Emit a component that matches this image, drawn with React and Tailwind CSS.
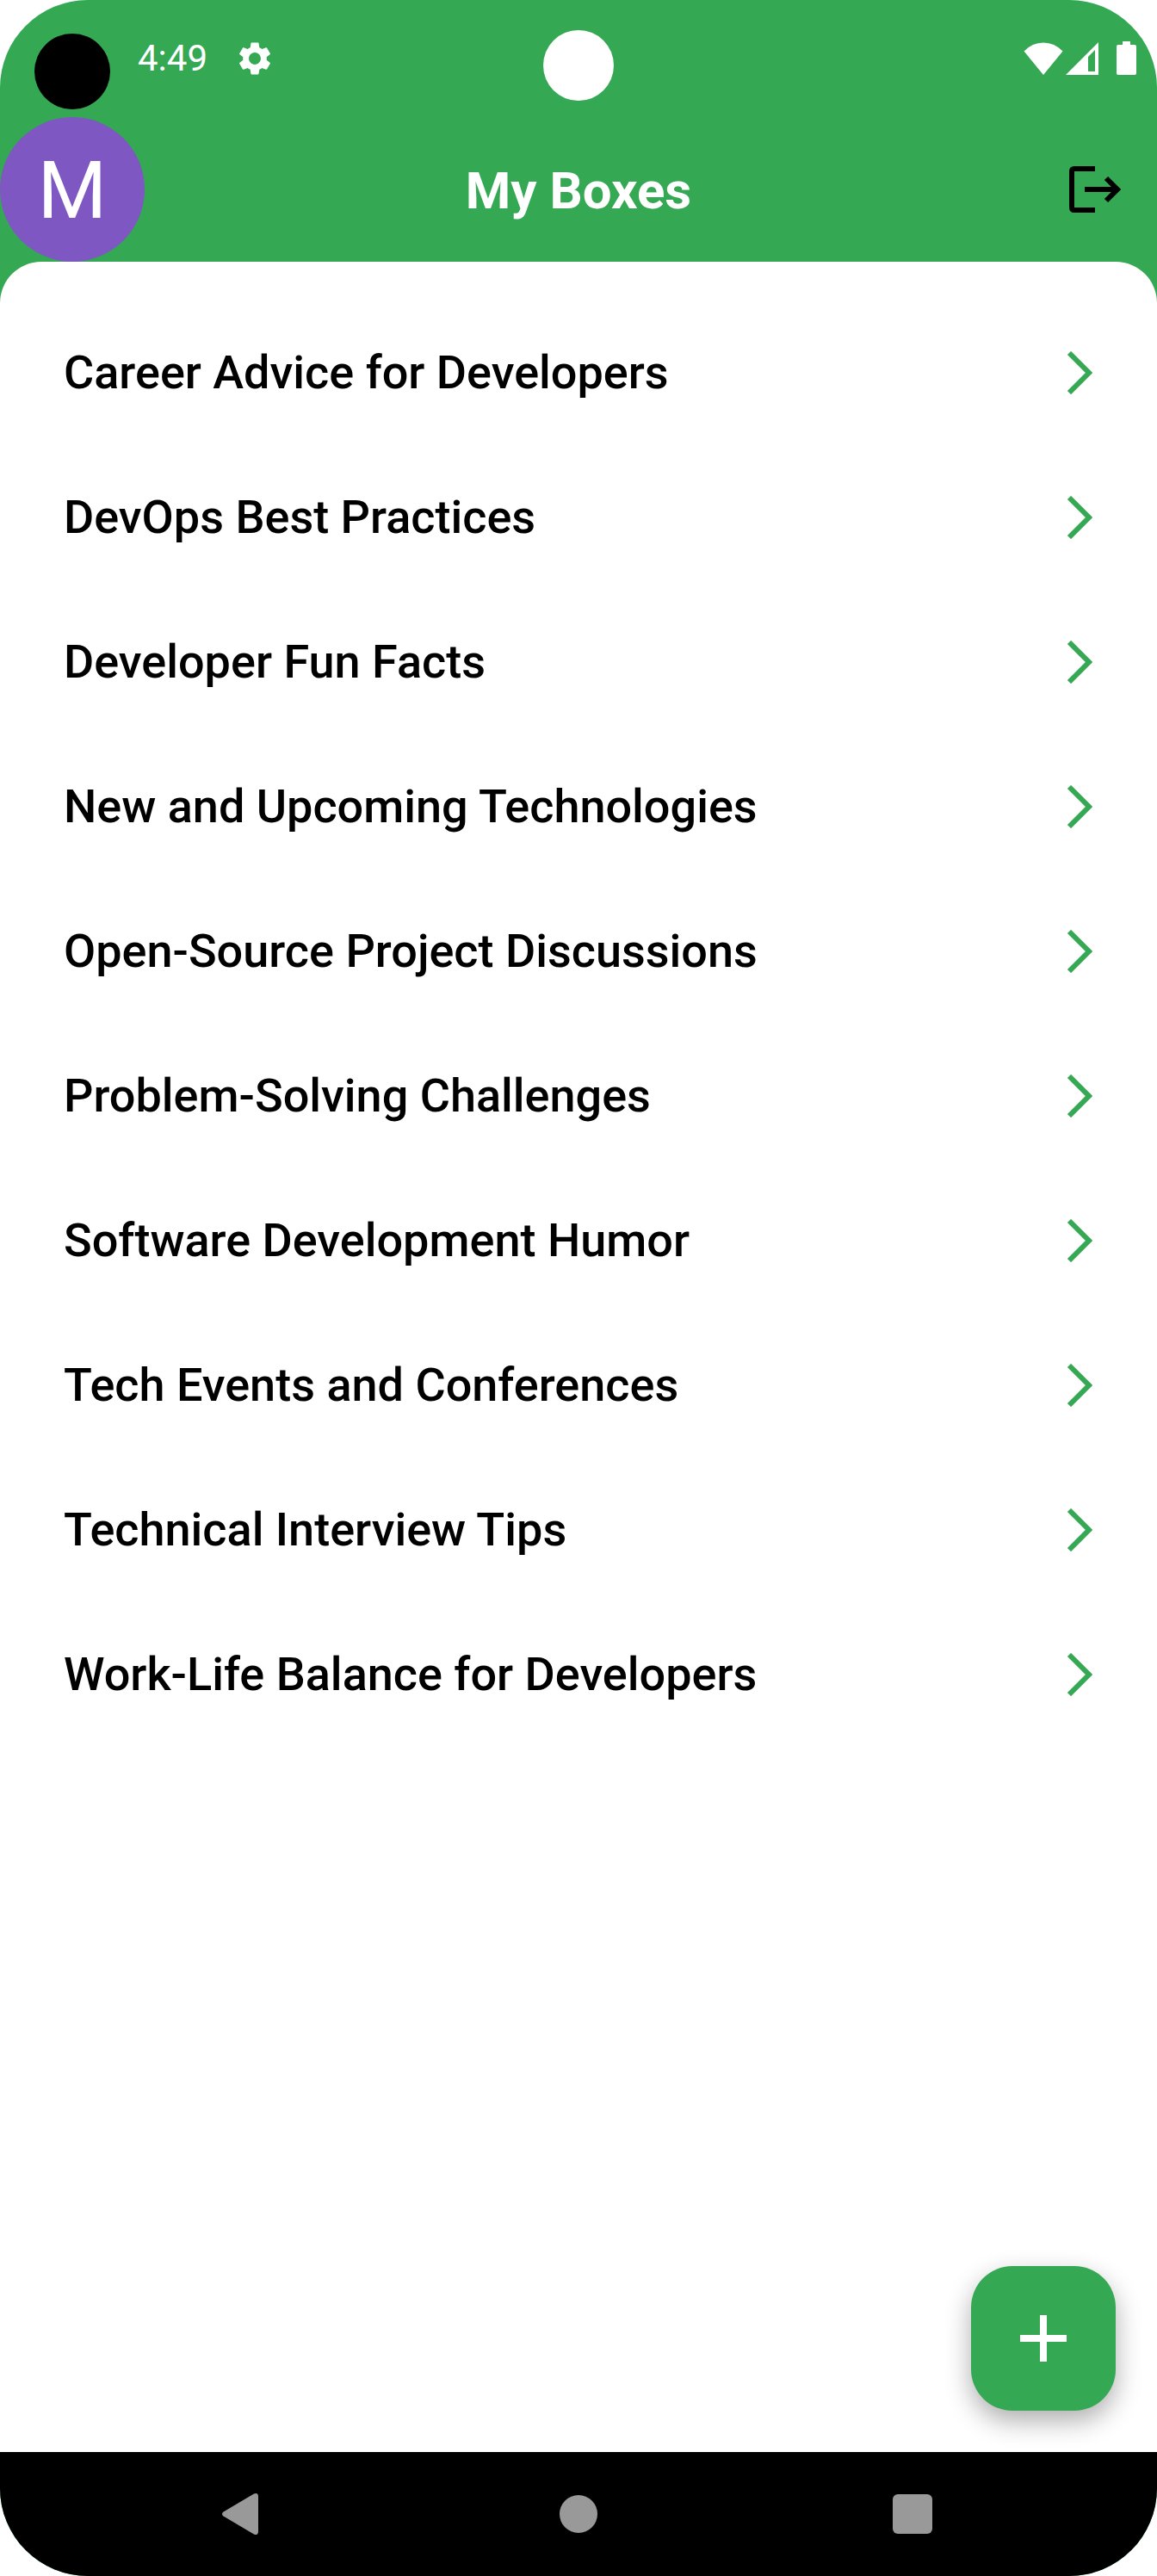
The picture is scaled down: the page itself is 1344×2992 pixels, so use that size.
import { MdSettings } from "react-icons/md";

const boxes = [
  "Career Advice for Developers",
  "DevOps Best Practices",
  "Developer Fun Facts",
  "New and Upcoming Technologies",
  "Open-Source Project Discussions",
  "Problem-Solving Challenges",
  "Software Development Humor",
  "Tech Events and Conferences",
  "Technical Interview Tips",
  "Work-Life Balance for Developers",
];

function StatusBar() {
  return (
    <div className="relative flex h-[136px] items-center pl-10 pr-6 text-white">
      <span className="mt-[30px] size-[88px] rounded-full bg-black" />
      <span className="ml-8 text-[42px] leading-none">4:49</span>
      <MdSettings className="ml-8 size-[46px]" aria-label="Settings" />
      <span className="absolute left-1/2 top-[35px] size-[82px] -translate-x-1/2 rounded-full bg-white" />
      <div className="ml-auto flex items-center">
        <svg className="h-10 w-[46px]" viewBox="0 0 46 40" fill="currentColor" aria-label="Wi-Fi">
          <path d="M0.5 11.5Q10 1.5 23 1.5T45.500 11.500L23 39Z" />
        </svg>
        <svg className="ml-[3px] h-10 w-[38px]" viewBox="0 0 38 40" fill="currentColor" fillRule="evenodd" aria-label="Mobile signal">
          <path d="M38 1V39H0ZM34 10L26 18V35H34Z" />
        </svg>
        <svg className="ml-[21px] h-10 w-[23px]" viewBox="0 0 23 40" fill="currentColor" aria-label="Battery">
          <path d="M7 0H16V4H21Q23 4 23 6V37Q23 39 21 39H2Q0 39 0 37V6Q0 4 2 4H7Z" />
        </svg>
      </div>
    </div>
  );
}

function Header() {
  return (
    <header className="grid grid-cols-[1fr_auto_1fr] items-center">
      <button type="button" aria-label="Account" className="flex size-[168px] items-center justify-center rounded-full bg-[#7e57c2] pt-1 text-[92px] leading-none text-white">
        M
      </button>
      <h1 className="pt-1 text-[60px] font-bold leading-none text-white">My Boxes</h1>
      <button type="button" aria-label="Log out" className="mr-[27px] justify-self-end p-3 text-black">
        <svg className="size-[72px]" viewBox="0 0 72 72" fill="none" stroke="currentColor" strokeWidth="6">
          <path d="M39 12H15Q12 12 12 15V57Q12 60 15 60H39" />
          <path d="M27 36H64" />
          <path d="M52 23L65 36L52 49" />
        </svg>
      </button>
    </header>
  );
}

function BoxRow({ name }) {
  return (
    <li>
      <a href="#" className="flex h-[168px] items-center justify-between pl-[74px] pr-[75px] text-black">
        <span className="text-[54px] font-medium leading-none">{name}</span>
        <svg className="h-[50px] w-[30px] text-[#34a853]" viewBox="0 0 30 50" fill="none" stroke="currentColor" strokeWidth="6" aria-hidden="true">
          <path d="M3 2L26 25L3 48" />
        </svg>
      </a>
    </li>
  );
}

function NavigationBar() {
  return (
    <nav className="grid h-36 grid-cols-[1fr_auto_1fr] items-center bg-black text-[#999999]">
      <button type="button" aria-label="Back" className="mr-[350px] justify-self-end">
        <svg className="h-12 w-[42px]" viewBox="0 0 42 48" fill="currentColor">
          <path d="M37 0.600Q42 -1.500 42 4V44Q42 49.500 37 47.400L1.500 26.500Q-1.500 24 1.500 21.500Z" />
        </svg>
      </button>
      <button type="button" aria-label="Home" className="size-11 rounded-full bg-[#999999]" />
      <button type="button" aria-label="Recent apps" className="ml-[343px] size-[46px] rounded-md bg-[#999999]" />
    </nav>
  );
}

export default function App() {
  return (
    <div className="min-h-screen bg-white font-['Roboto',sans-serif]">
      <div className="flex min-h-screen flex-col overflow-hidden rounded-[102px] bg-[#34a853]">
        <StatusBar />
        <Header />
        <main className="relative grow rounded-t-[48px] bg-white pt-[45px]">
          <ul>
            {boxes.map((name) => (
              <BoxRow key={name} name={name} />
            ))}
          </ul>
          <button type="button" aria-label="Add box" className="absolute bottom-12 right-12 flex size-[168px] items-center justify-center rounded-[48px] bg-[#34a853] text-white shadow-[0_12px_30px_rgba(0,0,0,0.32)]">
            <svg className="size-[54px]" viewBox="0 0 54 54" fill="none" stroke="currentColor" strokeWidth="8">
              <path d="M27 0V54M0 27H54" />
            </svg>
          </button>
        </main>
        <NavigationBar />
      </div>
    </div>
  );
}
